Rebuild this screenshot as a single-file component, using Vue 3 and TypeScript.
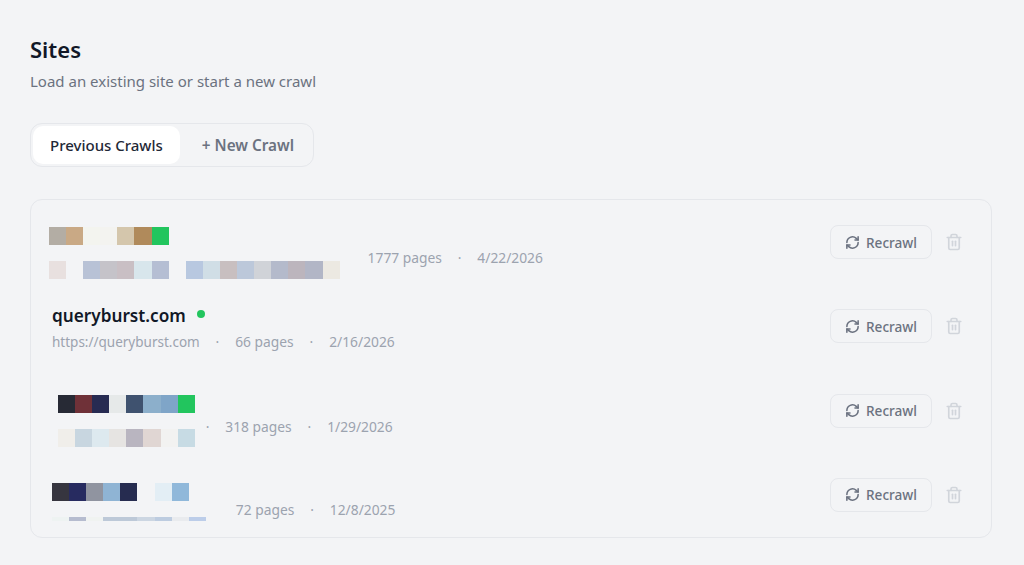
<script setup lang="ts">
import { ref } from 'vue'

interface Site {
  name?: string
  url?: string
  pages: number
  date: string
  indent: number
  shift?: number
  lift?: number
  mosaic?: string[][]
  clipped?: boolean
  dotBefore?: boolean
}

const tab = ref('previous')

// the site names are pixelated in the source, '' is an empty cell
const sites: Site[] = [
  {
    pages: 1777,
    date: '4/22/2026',
    indent: -3,
    shift: 22,
    lift: 11,
    mosaic: [
      ['#b3ada4', '#c9a985', '#f3f4ef', '#f3f3f0', '#d4c6ac', '#b08a5b', '#22c55e'],
      ['#e8e0df', '', '#b8c2d6', '#c5c3c9', '#c9bfc4', '#d8e6ec', '#b5bed3', '', '#b8c8e0', '#d0dee6', '#c8bfc0', '#bcc8da', '#d0d3d8', '#b4bacb', '#bcb5bd', '#b2b6c6', '#ece9e2'],
    ],
  },
  { name: 'queryburst.com', url: 'https://queryburst.com', pages: 66, date: '2/16/2026', indent: 0 },
  {
    pages: 318,
    date: '1/29/2026',
    indent: 6,
    shift: 20,
    lift: 10,
    dotBefore: true,
    mosaic: [
      ['#272a35', '#6f3138', '#272b52', '#e6e9e9', '#3f526f', '#8cafcb', '#7fa5c8', '#22c55e'],
      ['#f0eeea', '#c8d6e0', '#dde9ef', '#e6e4e2', '#b9b5c0', '#e0d6d3', '#f2f2f1', '#c7dbe4'],
    ],
  },
  {
    pages: 72,
    date: '12/8/2025',
    indent: 0,
    shift: 14,
    lift: 1,
    clipped: true,
    mosaic: [
      ['#36353f', '#272b60', '#9094a0', '#8fb4d4', '#262c50', '', '#e3eef5', '#90b8da'],
      ['#eef3f2', '#b6bccf', '#f0f3f1', '#bdc9d8', '#bdc9d8', '#ccd6e2', '#bdcce0', '#e9ebee', '#bccde9'],
    ],
  },
]
</script>

<template>
  <main class="page">
    <h1 class="title">Sites</h1>
    <p class="subtitle">Load an existing site or start a new crawl</p>

    <div class="tabs">
      <button class="tab" :class="{ active: tab === 'previous' }" @click="tab = 'previous'">Previous Crawls</button>
      <button class="tab" :class="{ active: tab === 'new' }" @click="tab = 'new'">+ New Crawl</button>
    </div>

    <section class="card">
      <div v-for="site in sites" :key="site.date" class="row">
        <div class="info">
          <template v-if="site.name">
            <div class="name-line">
              <span class="name">{{ site.name }}</span>
              <span class="live"></span>
            </div>
            <div class="meta">
              <span class="url">{{ site.url }}</span>
              <span class="sep">·</span>
              <span>{{ site.pages }} pages</span>
              <span class="sep">·</span>
              <span>{{ site.date }}</span>
            </div>
          </template>
          <div v-else class="mosaic-line" :style="{ marginTop: site.shift + 'px' }">
            <div class="mosaic" :class="{ clipped: site.clipped }" :style="{ marginLeft: site.indent + 'px' }">
              <div v-for="(line, i) in site.mosaic" :key="i" class="mosaic-row">
                <span
                  v-for="(c, j) in line"
                  :key="j"
                  class="cell"
                  :style="{ background: c || 'transparent' }"
                ></span>
              </div>
            </div>
            <div class="meta" :class="{ 'meta-tight': site.dotBefore }" :style="{ marginBottom: site.lift + 'px' }">
              <span v-if="site.dotBefore" class="sep first">·</span>
              <span>{{ site.pages }} pages</span>
              <span class="sep">·</span>
              <span>{{ site.date }}</span>
            </div>
          </div>
        </div>
        <div class="actions">
          <button class="recrawl">
            <svg width="15" height="15" viewBox="0 0 24 24" fill="none" stroke="currentColor" stroke-width="2.5" stroke-linecap="round" stroke-linejoin="round">
              <path d="M3 12a9 9 0 0 1 15-6.7L21 8" />
              <path d="M21 3v5h-5" />
              <path d="M21 12a9 9 0 0 1-15 6.7L3 16" />
              <path d="M8 16H3v5" />
            </svg>
            Recrawl
          </button>
          <button class="trash" aria-label="Delete">
            <svg width="18" height="18" viewBox="0 0 24 24" fill="none" stroke="currentColor" stroke-width="2.2" stroke-linecap="round" stroke-linejoin="round">
              <path d="M3 6h18" />
              <path d="M19 6v14a2 2 0 0 1-2 2H7a2 2 0 0 1-2-2V6" />
              <path d="M8 6V4a2 2 0 0 1 2-2h4a2 2 0 0 1 2 2v2" />
              <path d="M10 11v6" />
              <path d="M14 11v6" />
            </svg>
          </button>
        </div>
      </div>
    </section>
  </main>
</template>

<style>
html,
body {
  background: #f3f4f6;
}
</style>

<style scoped>
.page {
  box-sizing: border-box;
  height: 565px;
  padding: 34px 32px 0 30px;
  font-family: "Noto Sans", sans-serif;
  background: #f3f4f6;
  overflow: hidden;
}

.title {
  margin: 0;
  font-size: 22px;
  line-height: 30px;
  font-weight: 600;
  color: #111827;
}

.subtitle {
  margin: 5px 0 0;
  font-size: 15px;
  line-height: 24px;
  color: #6b7280;
}

.tabs {
  display: inline-flex;
  gap: 6px;
  margin-top: 30px;
  padding: 2px 3px 2px 2px;
  border: 1px solid #e5e7eb;
  border-radius: 12px;
  background: #f3f4f6;
}

.tab {
  height: 38px;
  padding: 0 16px;
  border: 0;
  border-radius: 10px;
  background: transparent;
  font: 600 15.3px "Noto Sans", sans-serif;
  color: #6b7280;
}

.tab.active {
  padding: 0 17px;
  background: #fff;
  font-size: 15px;
  font-weight: 500;
  color: #1f2937;
}

.card {
  display: grid;
  grid-auto-rows: 1fr;
  box-sizing: border-box;
  height: 339px;
  margin-top: 32px;
  border: 1px solid #e5e7eb;
  border-radius: 12px;
}

.row {
  display: flex;
  align-items: center;
  justify-content: space-between;
  padding: 0 21px;
  min-width: 0;
}

.name-line {
  display: flex;
  align-items: center;
  gap: 11px;
  padding-top: 3px;
}

.name {
  font-size: 17.2px;
  line-height: 24px;
  font-weight: 600;
  color: #111827;
}

.live {
  width: 8px;
  height: 8px;
  border-radius: 50%;
  background: #22c55e;
  margin-top: -4px;
}

.meta {
  display: flex;
  margin-top: 4px;
  font-size: 13.8px;
  line-height: 20px;
  color: #9ca3af;
}

.url {
  font-size: 13.5px;
}

.sep {
  width: 35.5px;
  text-align: center;
}

.mosaic-line {
  display: flex;
  align-items: flex-end;
}

.mosaic-line .meta {
  margin-left: 28px;
}

.mosaic-line .mosaic.clipped + .meta {
  margin-left: 30px;
}

.mosaic-line .meta-tight {
  margin-left: -5px;
}

.mosaic {
  display: flex;
  flex-direction: column;
  gap: 16px;
}

.mosaic.clipped {
  height: 38px;
  overflow: hidden;
}

.mosaic-row {
  display: flex;
}

.cell {
  flex: none;
  width: 17.1px;
  height: 18px;
}

.actions {
  display: flex;
  align-items: center;
  gap: 13px;
  margin-right: 7px;
}

.recrawl {
  display: inline-flex;
  align-items: center;
  gap: 6px;
  height: 34px;
  padding: 0 14px;
  border: 1px solid #e5e7eb;
  border-radius: 8px;
  background: #f3f4f6;
  font: 500 13.6px "Noto Sans", sans-serif;
  color: #6b7280;
}

.trash {
  display: flex;
  padding: 0;
  border: 0;
  background: transparent;
  color: #d1d5db;
}
</style>
